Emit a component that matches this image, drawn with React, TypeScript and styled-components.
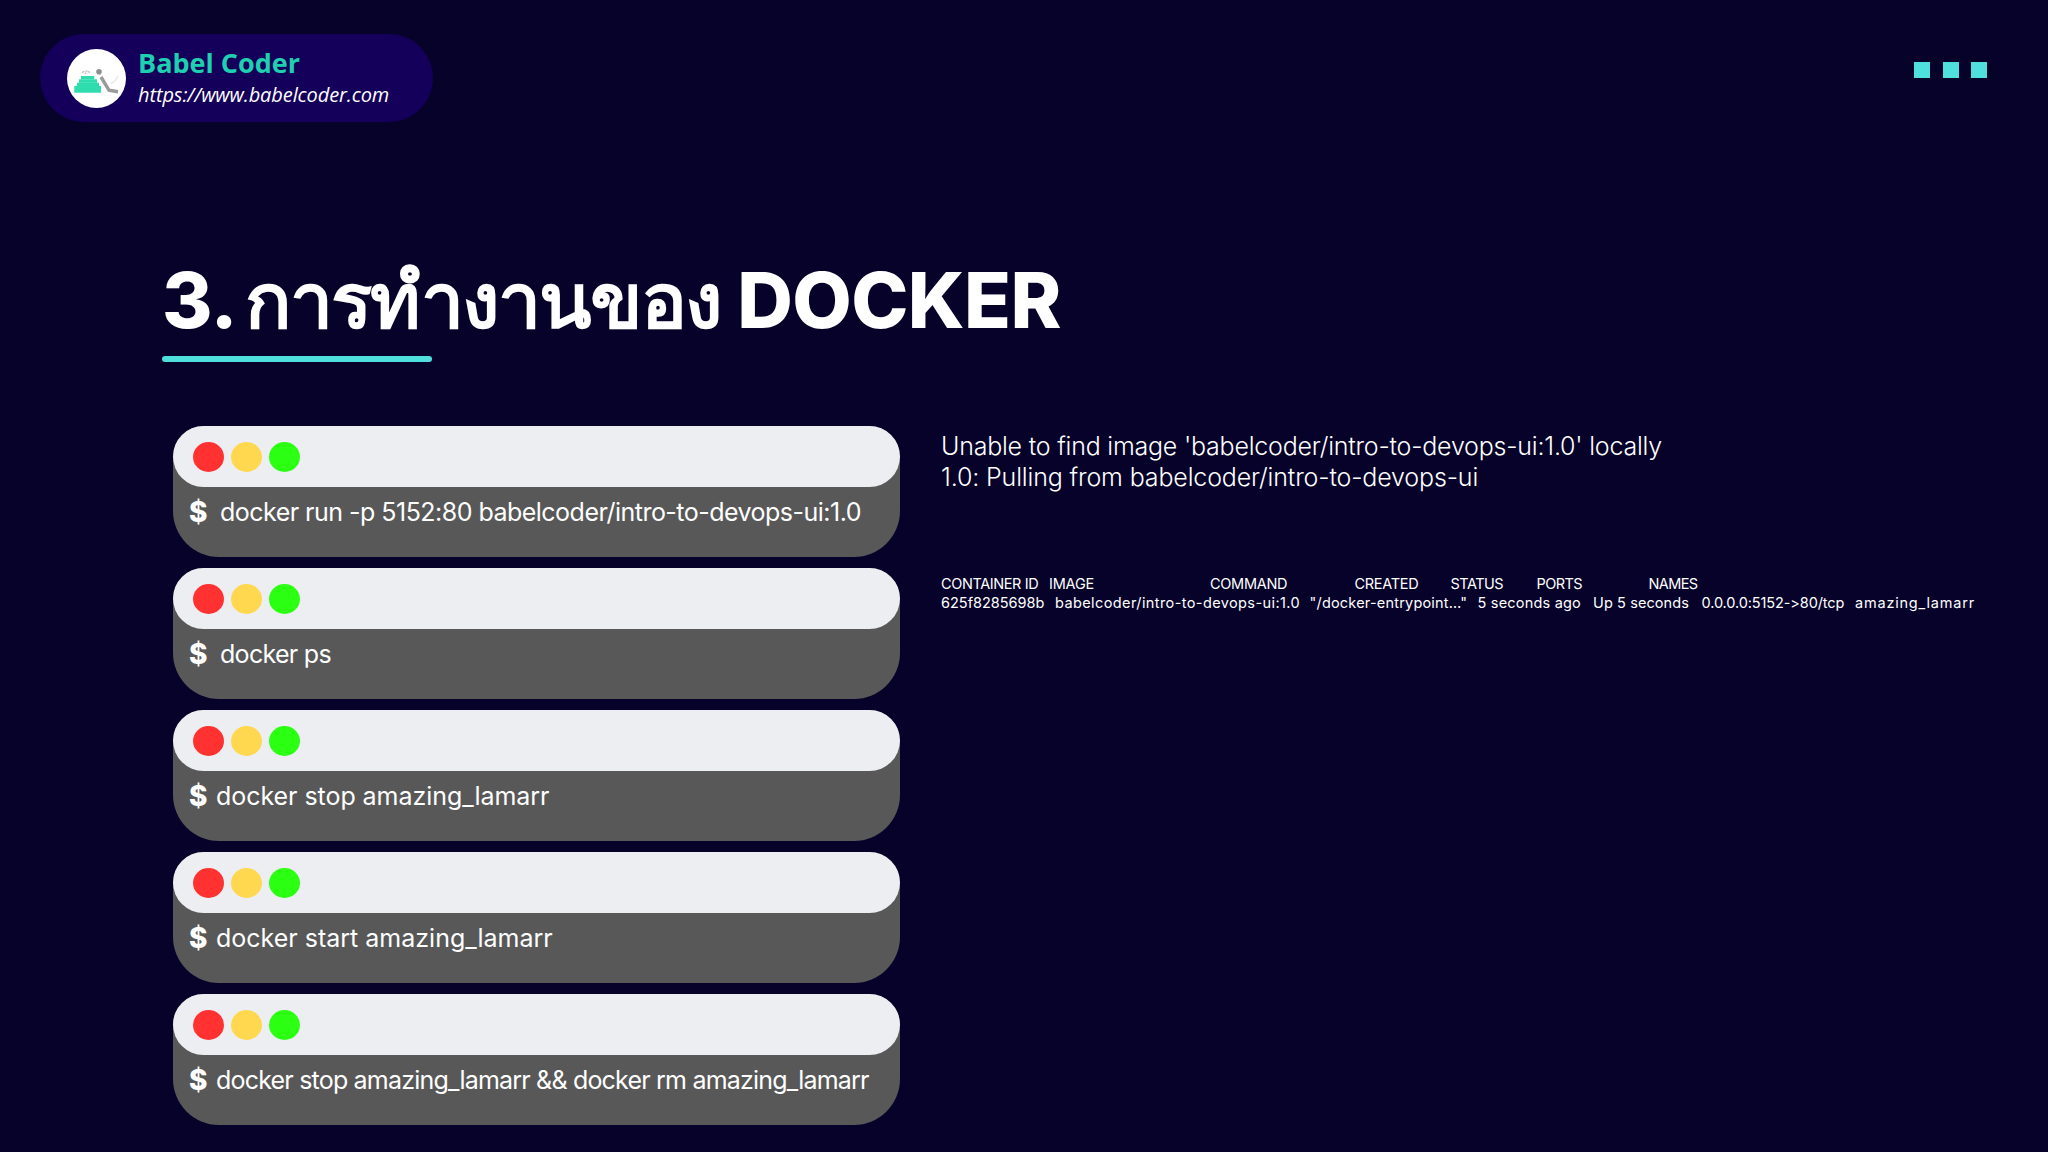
import styled, { createGlobalStyle } from "styled-components";

const GlobalStyle = createGlobalStyle`
  html, body {
    margin: 0;
    padding: 0;
    background: #060229;
  }
`;

const commands = [
  { text: "docker run -p 5152:80 babelcoder/intro-to-devops-ui:1.0", gap: 13, ls: -0.52 },
  { text: "docker ps", gap: 13, ls: -0.7 },
  { text: "docker stop amazing_lamarr", gap: 9, ls: -0.05 },
  { text: "docker start amazing_lamarr", gap: 9, ls: 0 },
  { text: "docker stop amazing_lamarr && docker rm amazing_lamarr", gap: 9, ls: -0.8 },
];

const headCols = [
  { label: "CONTAINER ID", w: 108, ls: -0.4 },
  { label: "IMAGE", w: 161, ls: -0.2 },
  { label: "COMMAND", w: 144.5, ls: -0.3 },
  { label: "CREATED", w: 96, ls: -0.3 },
  { label: "STATUS", w: 86, ls: -0.5 },
  { label: "PORTS", w: 112, ls: -0.6 },
  { label: "NAMES", w: 60, ls: -0.6 },
];

const rowCols = [
  { label: "625f8285698b", w: 114, ls: 0 },
  { label: "babelcoder/intro-to-devops-ui:1.0", w: 254.5, ls: 0.4 },
  { label: '"/docker-entrypoint…"', w: 168, ls: 0.2 },
  { label: "5 seconds ago", w: 115.5, ls: 0.2 },
  { label: "Up 5 seconds", w: 108.5, ls: 0.1 },
  { label: "0.0.0.0:5152->80/tcp", w: 153.5, ls: -0.1 },
  { label: "amazing_lamarr", w: 130, ls: 0.8 },
];

const App = (): JSX.Element => {
  return (
    <Page>
      <GlobalStyle />
      <TopBar>
        <Brand>
          <Logo viewBox="0 0 59 59">
            <circle cx="29.5" cy="29.5" r="29.5" fill="#ffffff" />
            <text x="14.5" y="24.5" fontSize="6" fill="#8a8a8a" fontFamily="Liberation Sans, sans-serif">
              {"</>"}
            </text>
            <rect x="14" y="27" width="13.3" height="3.4" fill="#2fdcae" />
            <rect x="12" y="30.3" width="18" height="3.5" fill="#2fdcae" />
            <rect x="10" y="33.7" width="22" height="3.4" fill="#2fdcae" />
            <rect x="7.3" y="37" width="26.7" height="6.7" fill="#2fdcae" />
            <circle cx="32" cy="22.7" r="2.8" fill="#8f8f8f" />
            <path d="M34 28 L42 41.3 L51 42.7" fill="none" stroke="#9a9a9a" strokeWidth="3.4" />
            <path d="M44 34.7 Q48.5 33 51 27" fill="none" stroke="#d2d2d2" strokeWidth="0.8" />
          </Logo>
          <BrandText>
            <BrandName>Babel Coder</BrandName>
            <BrandUrl>https://www.babelcoder.com</BrandUrl>
          </BrandText>
        </Brand>
        <Squares>
          <Square />
          <Square />
          <Square />
        </Squares>
      </TopBar>

      <Title>
        3. <ThaiWord>การทำงานของ</ThaiWord> DOCKER
      </Title>
      <Underline />

      <Content>
        <Cards>
          {commands.map((command) => (
            <Card key={command.text}>
              <CardHeader>
                <Dot $color="#ff3131" />
                <Dot $color="#ffd84f" />
                <Dot $color="#2bff12" />
              </CardHeader>
              <CardBody $gap={command.gap}>
                <Dollar>$</Dollar>
                <Command $ls={command.ls}>{command.text}</Command>
              </CardBody>
            </Card>
          ))}
        </Cards>

        <Output>
          <Message>
            <MessageLine $ls={-0.22}>Unable to find image 'babelcoder/intro-to-devops-ui:1.0' locally</MessageLine>
            <MessageLine $ls={-0.15}>1.0: Pulling from babelcoder/intro-to-devops-ui</MessageLine>
          </Message>
          <PsTable>
            <PsRow>
              {headCols.map((col) => (
                <PsCell key={col.label} $w={col.w} $ls={col.ls}>
                  {col.label}
                </PsCell>
              ))}
            </PsRow>
            <PsRow>
              {rowCols.map((col) => (
                <PsCell key={col.label} $w={col.w} $ls={col.ls}>
                  {col.label}
                </PsCell>
              ))}
            </PsRow>
          </PsTable>
        </Output>
      </Content>
    </Page>
  );
};

const Page = styled.div`
  width: 2048px;
  height: 1152px;
  overflow: hidden;
  background: #060229;
  color: #ffffff;
  font-family: Inter, "Noto Sans", sans-serif;
  font-feature-settings: "calt" 0;
  box-sizing: border-box;
  padding: 34px 61px 0 40px;
`;

const TopBar = styled.div`
  display: flex;
  justify-content: space-between;
  align-items: flex-start;
`;

const Brand = styled.div`
  width: 393px;
  height: 88px;
  box-sizing: border-box;
  padding-left: 27px;
  display: flex;
  align-items: center;
  gap: 12px;
  border-radius: 44px;
  background: #14005a;
`;

const Logo = styled.svg`
  width: 59px;
  height: 59px;
  flex-shrink: 0;
`;

const BrandText = styled.div`
  display: flex;
  flex-direction: column;
  margin-top: -2px;
  font-family: "Open Sans", sans-serif;
`;

const BrandName = styled.div`
  font-size: 27px;
  line-height: 34px;
  font-weight: 700;
  color: #1fd0b0;
`;

const BrandUrl = styled.div`
  font-size: 20px;
  line-height: 29px;
  font-style: italic;
  letter-spacing: -0.1px;
  color: #ffffff;
`;

const Squares = styled.div`
  display: flex;
  gap: 12.5px;
  margin-top: 28px;
`;

const Square = styled.div`
  width: 16px;
  height: 16px;
  background: #4fdfdc;
`;

const Title = styled.h1`
  margin: 132px 0 0 122px;
  font-size: 77px;
  line-height: 92px;
  font-weight: 800;
  letter-spacing: -0.6px;
  white-space: nowrap;
`;

const ThaiWord = styled.span`
  margin-left: -5px;
  letter-spacing: -2px;
`;

const Underline = styled.div`
  width: 270px;
  height: 6px;
  margin: 10px 0 0 122px;
  border-radius: 3px;
  background: #4fdfdc;
`;

const Content = styled.div`
  display: flex;
  margin: 64px 0 0 133px;
  gap: 41px;
`;

const Cards = styled.div`
  display: flex;
  flex-direction: column;
  gap: 11px;
  width: 727px;
`;

const Card = styled.div`
  height: 131px;
  border-radius: 31px 31px 46px 46px;
  background: #585858;
`;

const CardHeader = styled.div`
  height: 61px;
  box-sizing: border-box;
  padding: 0 0 0 20px;
  display: flex;
  align-items: center;
  gap: 7px;
  border-radius: 31px;
  background: #eceef1;
`;

const Dot = styled.div<{ $color: string }>`
  width: 31px;
  height: 30px;
  border-radius: 50%;
  background: ${(p) => p.$color};
`;

const CardBody = styled.div<{ $gap: number }>`
  display: flex;
  align-items: center;
  height: 50px;
  padding: 0 0 0 16px;
  gap: ${(p) => p.$gap}px;
`;

const Dollar = styled.span`
  width: 18px;
  font-size: 28px;
  font-weight: 800;
  text-align: center;
`;

const Command = styled.span<{ $ls: number }>`
  font-size: 25px;
  letter-spacing: ${(p) => p.$ls}px;
  white-space: nowrap;
`;

const Output = styled.div`
  display: flex;
  flex-direction: column;
  padding-top: 5px;
`;

const Message = styled.div`
  font-size: 25px;
  line-height: 31px;
  font-weight: 300;
  white-space: nowrap;
`;

const MessageLine = styled.div<{ $ls: number }>`
  letter-spacing: ${(p) => p.$ls}px;
`;

const PsTable = styled.div`
  margin-top: 81px;
  display: flex;
  flex-direction: column;
`;

const PsRow = styled.div`
  display: flex;
  height: 19px;
  align-items: center;
`;

const PsCell = styled.span<{ $w: number; $ls: number }>`
  flex: 0 0 ${(p) => p.$w}px;
  font-size: 14.5px;
  letter-spacing: ${(p) => p.$ls}px;
  white-space: nowrap;
`;

export default App;
